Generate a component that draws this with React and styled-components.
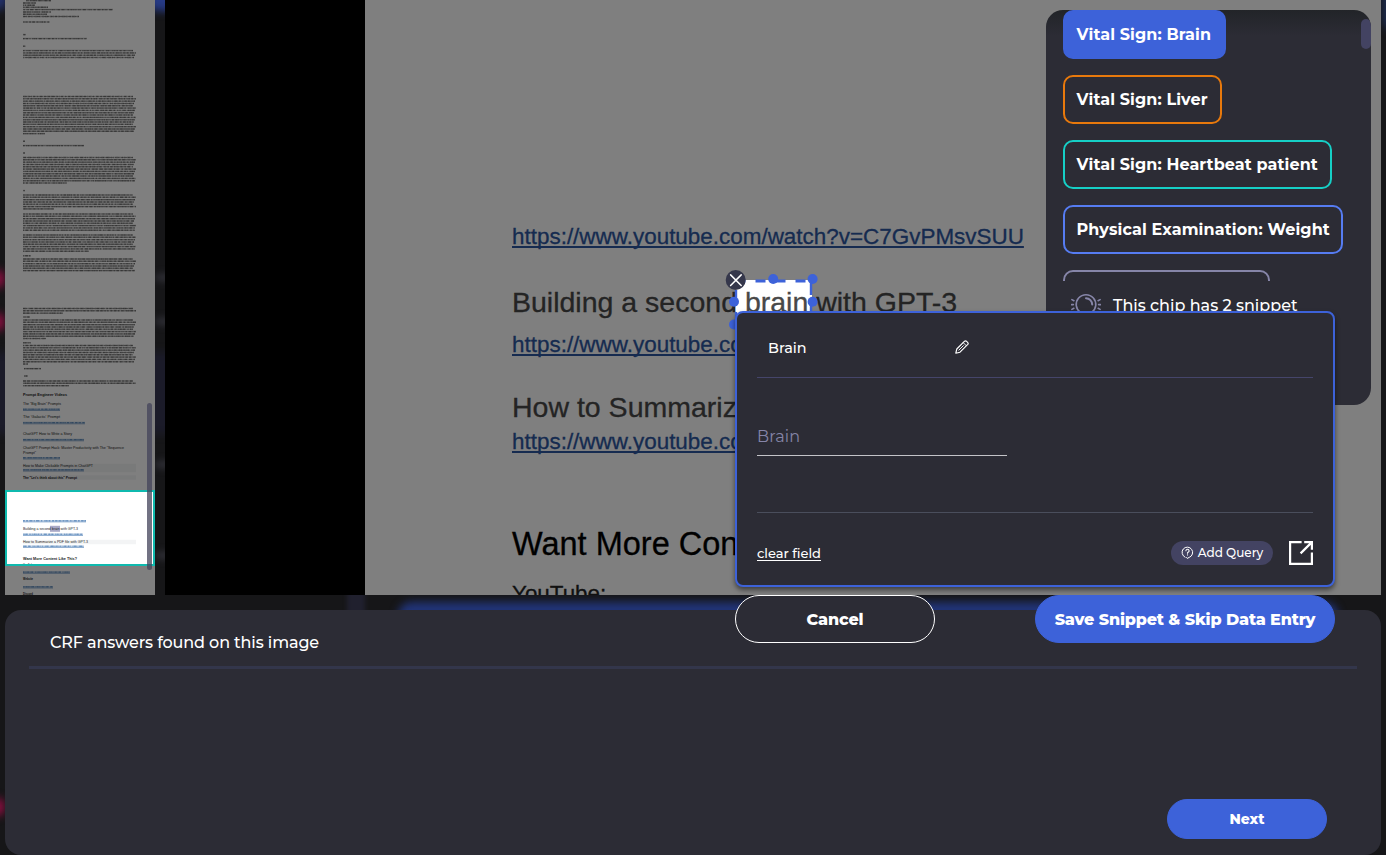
import React from "react";
import styled, { createGlobalStyle } from "styled-components";

const c = {
  ink: "#2c2c35",
  blue: "#3d62d9",
  slate: "#434362",
  mist: "#8685a8",
};

const Global = createGlobalStyle`
  * { box-sizing: border-box; }
  body { margin: 0; background: #161618; font-family: Montserrat, Inter, "Liberation Sans", sans-serif; color: #fff; overflow: hidden; }
  button { font-family: inherit; color: inherit; cursor: pointer; padding: 0; }
`;

const Page = styled.div`
  position: relative;
  width: 1386px;
  height: 855px;
  overflow: hidden;
  background: #161618;
  display: flex;
  flex-direction: column;
  gap: 15px;
  padding: 0 5px;
`;

const Glow = styled.div`
  position: absolute;
  left: ${(p) => p.$x}px;
  top: ${(p) => p.$y}px;
  width: ${(p) => p.$w}px;
  height: ${(p) => p.$h}px;
  border-radius: ${(p) => p.$r ?? 10}px;
  background: ${(p) => p.$color};
  filter: blur(${(p) => p.$blur ?? 4}px);
`;

const Workspace = styled.main`
  position: relative;
  display: flex;
  gap: 10px;
  height: 595px;
  flex: none;
`;

const Thumbs = styled.aside`
  position: relative;
  width: 150px;
  height: 595px;
  background: #fff;
  svg { display: block; }
`;

const ThumbScroll = styled.div`
  position: absolute;
  right: 3px;
  top: 403px;
  width: 5px;
  height: 167px;
  border-radius: 3px;
  background: rgba(67, 67, 90, 0.75);
`;

const Viewer = styled.section`
  position: relative;
  width: 1216px;
  height: 595px;
  padding-left: 200px;
  background: #000;
  overflow: hidden;
`;

const Sheet = styled.article`
  position: relative;
  height: 595px;
  overflow: hidden;
  background: #fff;
  padding: 222px 0 0 147px;
  display: flex;
  flex-direction: column;
  align-items: flex-start;
  font-family: "Liberation Sans", Arial, sans-serif;
  white-space: nowrap;
  -webkit-text-stroke: 0.3px currentColor;
`;

const DocLink = styled.span`
  flex: none;
  margin-top: ${(p) => p.$gap ?? 0}px;
  font-size: 22.45px;
  line-height: 30px;
  color: #2c56a0;
  text-decoration: underline;
  text-decoration-thickness: 2px;
  text-underline-offset: 2px;
  text-decoration-skip-ink: none;
`;

const DocLine = styled.p`
  flex: none;
  margin: ${(p) => p.$gap}px 0 0;
  font-size: ${(p) => p.$size}px;
  line-height: ${(p) => p.$line}px;
  color: ${(p) => p.$color ?? "#484848"};
`;

const Cutout = styled.div`
  position: absolute;
  left: 370px;
  top: 280px;
  width: 77px;
  height: 45px;
  box-shadow: 0 0 0 1500px rgba(0, 0, 0, 0.5);
`;

const Frame = styled.svg`
  position: absolute;
  left: 555px;
  top: 265px;
  z-index: 2;
`;

const ChipPanel = styled.aside`
  position: absolute;
  right: 10px;
  top: 10px;
  width: 325px;
  height: 395px;
  border-radius: 17px;
  overflow: hidden;
  background: linear-gradient(#222428 0, ${c.ink} 26px);
  padding-left: 17px;
`;

const ChipList = styled.div`
  height: 271px;
  overflow: hidden;
  display: flex;
  flex-direction: column;
  align-items: flex-start;
  gap: 16px;
`;

const Chip = styled.div`
  flex: none;
  height: 49px;
  width: ${(p) => p.$w}px;
  padding: 0 0 1px 11.5px;
  display: flex;
  align-items: center;
  border: 2px solid ${(p) => p.$color};
  border-radius: 10px;
  background: ${(p) => (p.$solid ? p.$color : "transparent")};
  font-size: 16px;
  font-weight: 700;
  letter-spacing: 0.11px;
  white-space: nowrap;
`;

const PanelScroll = styled.div`
  position: absolute;
  right: 0;
  top: 9px;
  width: 10px;
  height: 30px;
  border-radius: 5px;
  background: ${c.slate};
`;

const Hint = styled.div`
  display: flex;
  align-items: center;
  gap: 12px;
  height: 48px;
  padding-left: 8px;
  font-size: 16px;
  font-weight: 500;
  white-space: nowrap;
`;

const Dialog = styled.div`
  position: absolute;
  z-index: 3;
  left: 735px;
  top: 311px;
  width: 600px;
  display: flex;
  flex-direction: column;
  gap: 8px;
`;

const Card = styled.section`
  height: 276px;
  border: 2px solid ${c.blue};
  border-radius: 8px;
  background: ${c.ink};
  box-shadow: 0 3px 5px rgba(0, 0, 0, 0.5);
  padding: 0 20px;
`;

const CardHead = styled.header`
  height: 65px;
  padding-left: 11px;
  border-bottom: 1px solid #45456a;
  display: flex;
  align-items: center;
  font-size: 14.4px;
  font-weight: 500;
  span { width: 187px; padding-top: 6px; }
  svg { margin-top: 4px; }
`;

const CardBody = styled.div`
  height: 135px;
  padding-top: 37px;
  border-bottom: 1px solid #4a4e5c;
`;

const Field = styled.div`
  width: 250px;
  height: 41px;
  padding-top: 12px;
  border-bottom: 1px solid #c4c4c8;
  color: ${c.mist};
  font-size: 16px;
  line-height: 20px;
  letter-spacing: 0.2px;
`;

const CardFoot = styled.footer`
  height: 72px;
  padding-top: 7px;
  display: flex;
  align-items: center;
`;

const ClearLink = styled.a`
  flex: 1;
  font-size: 13px;
  font-weight: 500;
  text-decoration: underline;
  text-underline-offset: 2px;
`;

const QueryButton = styled.button`
  width: 102px;
  height: 24px;
  margin-right: 16px;
  border: 0;
  border-radius: 12px;
  background: ${c.slate};
  display: flex;
  align-items: center;
  justify-content: center;
  gap: 4px;
  font-size: 12px;
  font-weight: 500;
  white-space: nowrap;
`;

const Actions = styled.div`
  display: flex;
  justify-content: space-between;
`;

const PillButton = styled.button`
  width: ${(p) => p.$w}px;
  height: ${(p) => p.$h ?? 48}px;
  border: 1px solid ${(p) => (p.$outline ? "#fff" : c.blue)};
  border-radius: 24px;
  background: ${(p) => (p.$outline ? c.ink : c.blue)};
  font-size: ${(p) => p.$size ?? 16}px;
  font-weight: 800;
  letter-spacing: ${(p) => p.$ls ?? 0}px;
  white-space: nowrap;
`;

const Answers = styled.section`
  position: relative;
  flex: none;
  height: 245px;
  border-radius: 16px;
  background: ${c.ink};
  padding: 0 24px 16px;
  display: flex;
  flex-direction: column;
  justify-content: space-between;
`;

const AnswersTitle = styled.h2`
  margin: 0;
  height: 59px;
  padding: 21px 0 0 21px;
  border-bottom: 3px solid #33364b;
  font-size: 16px;
  line-height: 24px;
  font-weight: 500;
  letter-spacing: -0.12px;
`;

const AnswersFoot = styled.div`
  display: flex;
  justify-content: flex-end;
  padding-right: 30px;
`;

// [first line y, line count, width of the last line]
const paragraphs = [
  [50.6, 4, 111], [96.5, 17, 22], [157.5, 12, 44], [195, 7, 31],
  [214, 8, 112], [235, 8, 66], [259, 6, 112], [308.5, 3, 40],
  [320, 9, 23], [345.5, 9, 5], [381, 3, 46],
];

// [y, start x, width]
const shortLines = [
  [0.6, 21, 25], [3, 18, 13], [5.2, 18, 12], [7.3, 18, 25], [9.6, 18, 90],
  [12, 18, 28], [14.3, 18, 24], [16.5, 18, 56], [22, 18, 27], [34.6, 18, 2.5],
  [38.6, 18, 64], [46.2, 18, 2.5], [141.2, 18, 2], [145.6, 18, 61], [153, 18, 2],
  [190.6, 18, 2], [255.8, 18, 8], [317, 18, 7], [342.8, 18, 8], [368.6, 19, 17], [376, 19, 3.5],
];

const headings = [
  [396.4, 44, 4, "Prompt Engineer Videos", 700],
  [405.4, 38, 3.6, "The \"Big Brain\" Prompts"],
  [418.4, 37, 3.6, "The 'Galactic' Prompt"],
  [435.4, 49, 3.6, "ChatGPT How to Write a Story"],
  [448.7, 101, 3.6, "ChatGPT Prompt Hack: Master Productivity with The \"Sequence"],
  [453.6, 13, 3.6, "Prompt\""],
  [466.7, 70, 3.6, "How to Make Clickable Prompts in ChatGPT"],
  [478.7, 54, 3.6, "The \"Let's think about this\" Prompt", 700],
  [529.9, 55, 3.6, "Building a second brain with GPT-3"],
  [543, 65, 3.6, "How to Summarize a PDF file with GPT-3"],
  [559.6, 54, 4.2, "Want More Content Like This?", 700],
  [565.6, 12, 3, "YouTube:"],
  [580.4, 10, 3, "Website", 700],
  [595, 10, 3, "Discord", 700],
];

const links = [
  [409.5, 37], [422.8, 62], [439.8, 61], [458, 37], [470, 61],
  [520.9, 63], [534.5, 60], [546.5, 61], [572.3, 47], [587, 30],
];

const dashes = (seed) =>
  Array.from({ length: 16 }, (_, i) => {
    const v = Math.abs(Math.sin(seed * 12.9 + i * 78.2) * 43758.5) % 1;
    return (i % 2 ? 0.6 + v * 1.6 : 0.6 + v * 3).toFixed(2);
  }).join(" ");

const Scribble = ({ y, x = 18, w, color = "#333" }) => (
  <g>
    <path d={`M${x} ${y}h${w}`} stroke={color} strokeWidth="1.5" opacity=".28" />
    <path d={`M${x} ${y}h${w}`} stroke={color} strokeWidth="1.4" strokeDasharray={dashes(y)} opacity=".36" />
    <path d={`M${x} ${y}h${w}`} stroke={color} strokeWidth="1.1" strokeDasharray={dashes(y + 7)} strokeDashoffset="3" opacity=".36" />
  </g>
);

const MiniDocument = () => (
  <svg width="150" height="595" viewBox="0 0 150 595" fontFamily="Liberation Sans, Arial, sans-serif">
    {shortLines.map(([y, x, w]) => <Scribble key={y} y={y} x={x} w={w} />)}
    {paragraphs.map(([top, count, last]) =>
      Array.from({ length: count }, (_, i) => (
        <Scribble key={`${top}-${i}`} y={top + i * 2.32} w={i === count - 1 ? last : 110 + ((i * 7) % 4)} />
      ))
    )}
    <path d="M18 466h113M18 470h113M18 477.5h113M18 542h113" stroke="#9097a5" strokeWidth="4.5" opacity=".1" />
    <rect x="45" y="525.8" width="10" height="6" fill="#a9a9c6" />
    {headings.map(([y, w, size, text, weight]) => (
      <text key={y} x="18" y={y} fontSize={size} fontWeight={weight ?? 400} textLength={w} lengthAdjust="spacingAndGlyphs" fill="#222">{text}</text>
    ))}
    {links.map(([y, w]) => (
      <g key={y}>
        <Scribble y={y - 0.2} w={w} color="#2763a6" />
        <path d={`M18 ${y + 1}h${w}`} stroke="#2763a6" strokeWidth=".5" />
      </g>
    ))}
    <path d="M0 0h150v490H0zM0 566h150v29H0z" fill="#000" opacity=".5" />
    <rect x="1" y="491" width="148" height="74" fill="none" stroke="#0fb9ae" strokeWidth="2" />
  </svg>
);

const SelectionFrame = () => (
  <Frame width="100" height="75" viewBox="720 265 100 75">
    <path d="M735.5 281H812" stroke={c.blue} strokeWidth="3" strokeDasharray="10 10" />
    <path d="M736 290v13M736 312v13M811 283v12M811 303v12" stroke={c.blue} strokeWidth="2.4" />
    <g fill={c.blue}>
      <circle cx="773.2" cy="279" r="5" />
      <circle cx="812.6" cy="279" r="5" />
      <circle cx="734" cy="301.8" r="5" />
      <circle cx="812.6" cy="301.8" r="5" />
      <circle cx="734" cy="324.5" r="5" />
    </g>
    <circle cx="735.7" cy="280" r="10" fill="#35374b" />
    <path d="M730.6 274.9l10.6 10.6M741.2 274.9l-10.6 10.6" stroke="#fff" strokeWidth="1.5" strokeLinecap="round" />
  </Frame>
);

const BulbIcon = () => (
  <svg width="30" height="30" viewBox="0 0 30 30" fill="none" stroke={c.mist} strokeWidth="1.6" strokeLinecap="round">
    <path d="M9.5 22.6a9.8 9.8 0 1 1 11 0" />
    <path d="M15 8.2a6.4 6.4 0 0 1 6.2 6.4" strokeWidth="2" />
    <path d="M.9 9.6l2 1.1M.6 14.6h1.8M.9 19.4l2-1.1M29.1 9.6l-2 1.1M29.4 14.6h-1.8M29.1 19.4l-2-1.1" />
    <path d="M10.5 24.5h9M11 27.5h8" />
  </svg>
);

const PencilIcon = () => (
  <svg width="14" height="14" viewBox="0 0 14 14" fill="none" stroke="#fff" strokeWidth="1.15" strokeLinejoin="round">
    <path d="M.8 13.2l1-4.2L9.6 1.2q.9-.8 1.8 0l1.4 1.4q.8.9 0 1.8L5 12.2z" />
    <path d="M8.2 2.6l3.2 3.2M3.6 10.4l5-5" strokeWidth=".95" />
  </svg>
);

const QueryIcon = () => (
  <svg width="13" height="13" viewBox="0 0 13 13" fill="none" stroke="#fff" strokeLinecap="round" strokeLinejoin="round">
    <path d="M4 11.2A5.3 5.3 0 1 1 8.2 11.4L6.2 12.4L5.4 11.5" strokeWidth="1" />
    <path d="M4.9 4.8a1.6 1.6 0 1 1 2.2 1.5q-.6.3-.6.9M6.5 8.8v.1" strokeWidth="1.1" />
  </svg>
);

const OpenIcon = () => (
  <svg width="24" height="24" viewBox="0 0 24 24" fill="none" stroke="#fff" strokeWidth="2.2">
    <path d="M12.6 1.1H1.1v21.8h21.8V11.4" />
    <path d="M15.2 1.1h7.7v7.7M22.9 1.1L11.6 12.4" />
  </svg>
);

const chips = [
  ["Vital Sign: Brain", 163, c.blue, true],
  ["Vital Sign: Liver", 159, "#e8790c"],
  ["Vital Sign: Heartbeat patient", 269, "#16cfc6"],
  ["Physical Examination: Weight", 280, "#567cf2"],
  ["", 207, c.mist],
];

export default function App() {
  return (
    <Page>
      <Global />
      <Glow $x={-16} $y={-20} $w={24} $h={30} $color="#223069" />
      <Glow $x={148} $y={-20} $w={40} $h={31} $color="#263a86" />
      <Glow $x={-10} $y={270} $w={15} $h={18} $color="#8a0e40" />
      <Glow $x={-10} $y={313} $w={15} $h={18} $color="#8a0e40" />
      <Glow $x={-10} $y={798} $w={15} $h={18} $color="#8a0e40" />
      <Glow $x={-10} $y={352} $w={190} $h={82} $color="#1b1b29" />
      <Glow $x={155} $y={273} $w={30} $h={9} $color="#2b2b31" $blur={3} />
      <Glow $x={155} $y={317} $w={30} $h={9} $color="#2b2b31" $blur={3} />
      <Glow $x={155} $y={460} $w={30} $h={9} $color="#2b2b31" $blur={3} />
      <Glow $x={155} $y={551} $w={30} $h={9} $color="#2b2b31" $blur={3} />
      <Glow $x={347} $y={580} $w={18} $h={50} $color="#20202e" $r={2} $blur={2} />
      <Glow $x={398} $y={602} $w={940} $h={40} $color="#213478" $r={14} />
      <Glow $x={1383} $y={-20} $w={20} $h={50} $color="#1d2d55" />
      <Workspace>
        <Thumbs>
          <MiniDocument />
          <ThumbScroll />
        </Thumbs>
        <Viewer>
          <Sheet>
            <DocLink>https://www.youtube.com/watch?v=C7GvPMsvSUU</DocLink>
            <DocLine $gap={32} $size={28.5} $line={36}>Building a second brain with GPT-3</DocLine>
            <DocLink $gap={10}>https://www.youtube.com</DocLink>
            <DocLine $gap={29} $size={28.5} $line={36}>How to Summarize</DocLine>
            <DocLink $gap={2}>https://www.youtube.com</DocLink>
            <DocLine $gap={67} $size={32.5} $line={40} $color="#000">Want More Content</DocLine>
            <DocLine $gap={15} $size={22.4} $line={30} $color="#222">YouTube:</DocLine>
            <Cutout />
          </Sheet>
          <SelectionFrame />
          <ChipPanel>
            <ChipList>
              {chips.map(([label, w, color, solid]) => (
                <Chip key={w} $w={w} $color={color} $solid={solid}>{label}</Chip>
              ))}
            </ChipList>
            <Hint><BulbIcon />This chip has 2 snippet</Hint>
            <PanelScroll />
          </ChipPanel>
        </Viewer>
      </Workspace>
      <Answers>
        <AnswersTitle>CRF answers found on this image</AnswersTitle>
        <AnswersFoot>
          <PillButton $w={160} $h={40} $size={14}>Next</PillButton>
        </AnswersFoot>
      </Answers>
      <Dialog>
        <Card>
          <CardHead><span>Brain</span><PencilIcon /></CardHead>
          <CardBody><Field>Brain</Field></CardBody>
          <CardFoot>
            <ClearLink>clear field</ClearLink>
            <QueryButton><QueryIcon />Add Query</QueryButton>
            <OpenIcon />
          </CardFoot>
        </Card>
        <Actions>
          <PillButton $w={200} $outline $ls={-0.15}>Cancel</PillButton>
          <PillButton $w={300} $ls={-0.15}>Save Snippet &amp; Skip Data Entry</PillButton>
        </Actions>
      </Dialog>
    </Page>
  );
}
